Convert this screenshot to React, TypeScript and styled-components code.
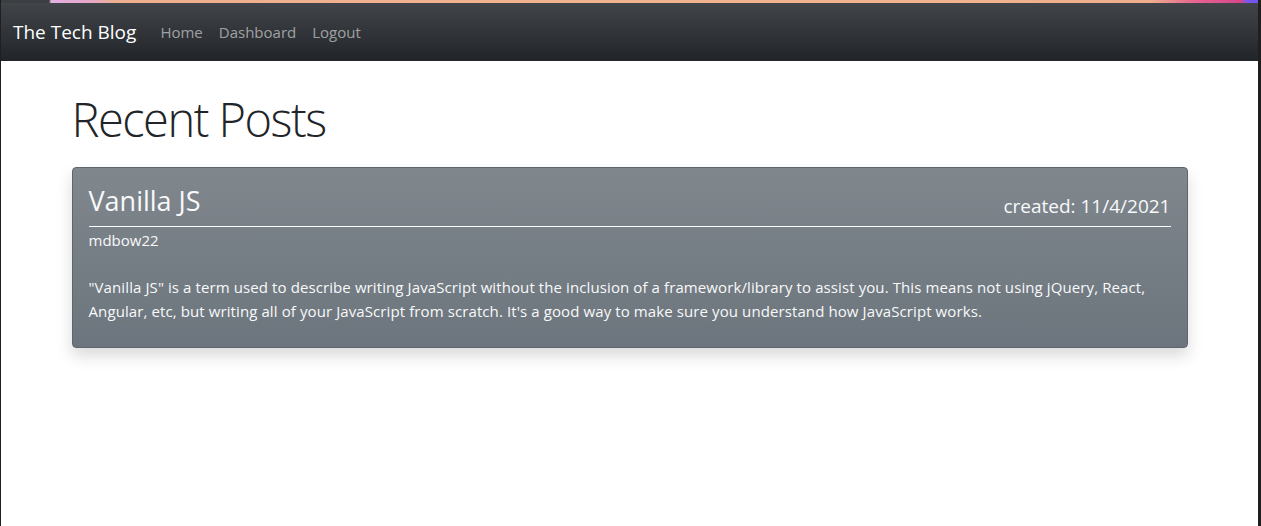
import * as React from 'react';
import styled, { createGlobalStyle } from 'styled-components';

const GlobalStyle = createGlobalStyle`
    * { box-sizing: border-box; }
    html, body {
        margin: 0;
        padding: 0;
        background: #ffffff;
    }
    body {
        font-family: "Open Sans", "Noto Sans", "Liberation Sans", sans-serif;
        font-size: 16px;
        line-height: 1.5;
        color: #212529;
    }
`;

const Frame = styled.div`
    width: 1261px;
    height: 526px;
    border-left: 1px solid #1f1f1f;
    border-right: 3px solid #1f1f1f;
    overflow: hidden;
    background: #fff;
`;

const TopStrip = styled.div`
    height: 3px;
    background: linear-gradient(
        90deg,
        #3c3f42 0px,
        #3c3f42 48px,
        #e2b0e0 50px,
        #e6a8c8 90px,
        #efb090 115px,
        #f1b48e 900px,
        #efae8e 1150px,
        #e86890 1190px,
        #d8448c 1240px,
        #7857ee 1246px,
        #6d55f0 1257px
    );
`;

const Navbar = styled.nav`
    display: flex;
    align-items: center;
    height: 58px;
    padding: 0 12px;
    background: linear-gradient(180deg, #414549 0%, #212529 100%);
`;

const Brand = styled.a`
    color: #ffffff;
    font-size: 19px;
    margin-right: 16px;
    text-decoration: none;
    white-space: nowrap;
`;

const NavList = styled.div`
    display: flex;
`;

const NavLink = styled.a`
    color: rgba(255, 255, 255, 0.55);
    font-size: 15px;
    padding: 8px;
    text-decoration: none;
`;

const Container = styled.main`
    width: 1140px;
    margin: 0 auto;
    padding: 0 12px;
`;

const PageTitle = styled.h1`
    font-size: 47px;
    font-weight: 300;
    letter-spacing: -1.5px;
    line-height: 1.2;
    margin: 30px 0 20px;
    color: #212529;
`;

const Card = styled.article`
    background: linear-gradient(180deg, #80878d 0%, #6c757d 100%);
    border: 1px solid #5e656b;
    border-radius: 4px;
    box-shadow: 0 8px 16px rgba(0, 0, 0, 0.15);
    padding: 17px 16px 24px;
    color: #f8f9fa;
`;

const CardHeader = styled.header`
    display: flex;
    justify-content: space-between;
    align-items: flex-end;
    border-bottom: 1px solid #ffffff;
    padding-bottom: 8px;
`;

const PostTitle = styled.h3`
    margin: 0;
    font-size: 27px;
    font-weight: 400;
    line-height: 1.2;
`;

const Created = styled.h5`
    margin: 0;
    font-size: 19px;
    font-weight: 400;
    line-height: 1.2;
`;

const Author = styled.div`
    font-size: 15px;
    margin-top: 2px;
`;

const Body = styled.p`
    font-size: 15px;
    line-height: 24px;
    letter-spacing: 0.1px;
    margin: 24px 0 0;
`;

export default function App() {
    return <Frame>
        <GlobalStyle />
        <TopStrip />
        <Navbar>
            <Brand href="#">The Tech Blog</Brand>
            <NavList>
                <NavLink href="#">Home</NavLink>
                <NavLink href="#">Dashboard</NavLink>
                <NavLink href="#">Logout</NavLink>
            </NavList>
        </Navbar>
        <Container>
            <PageTitle>Recent Posts</PageTitle>
            <Card>
                <CardHeader>
                    <PostTitle>Vanilla JS</PostTitle>
                    <Created>created: 11/4/2021</Created>
                </CardHeader>
                <Author>mdbow22</Author>
                <Body>
                    "Vanilla JS" is a term used to describe writing JavaScript without the inclusion of a framework/library to assist you. This means not using jQuery, React, Angular, etc, but writing all of your JavaScript from scratch. It's a good way to make sure you understand how JavaScript works.
                </Body>
            </Card>
        </Container>
    </Frame>;
}
